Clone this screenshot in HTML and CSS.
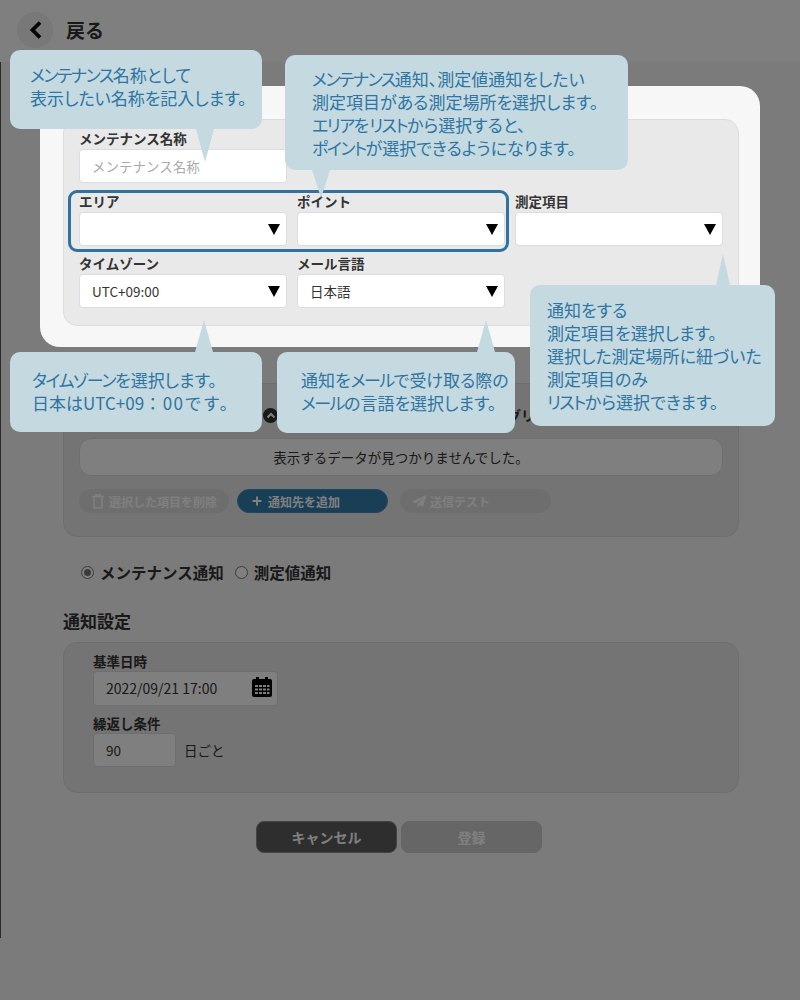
FILE: index.html
```html
<!DOCTYPE html>
<html lang="ja">
  <head>
    <meta charset="UTF-8" />
    <title>メンテナンス通知</title>
    <link rel="stylesheet" href="styles.css">
  </head>
  <body>
    <div class="page">
      <header class="top-bar">
        <span class="back-btn">
          <svg width="18" height="20" viewBox="0 0 18 20"><path d="M14 2.500 6.500 10l7.500 7.500" fill="none" stroke="#000" stroke-width="3.800"/></svg>
        </span>
        <span class="back-label">戻る</span>
      </header>

      <main class="content">
        <div class="spot-card">
          <div class="panel form-grid">
            <div class="field">
              <label>メンテナンス名称</label>
              <div class="input placeholder">メンテナンス名称</div>
            </div>
            <div></div>
            <div></div>

            <div class="field">
              <label>エリア</label>
              <div class="input select"></div>
            </div>
            <div class="field">
              <label>ポイント</label>
              <div class="input select"></div>
            </div>
            <div class="field">
              <label>測定項目</label>
              <div class="input select"></div>
            </div>

            <div class="field">
              <label>タイムゾーン</label>
              <div class="input select">UTC+09:00</div>
            </div>
            <div class="field">
              <label>メール言語</label>
              <div class="input select">日本語</div>
            </div>
          </div>
          <div class="highlight"></div>
        </div>

        <section class="panel dest-panel">
          <div class="dest-title">
            <span class="toggle">
              <svg width="10" height="7" viewBox="0 0 10 7"><path d="M1.500 5.500 5 2l3.500 3.500" fill="none" stroke="#fff" stroke-width="2"/></svg>
            </span>
            <span>通知先のメールアドレス・メーリングリスト</span>
          </div>
          <div class="empty-box">表示するデータが見つかりませんでした。</div>
          <div class="pill-row">
            <span class="pill">
              <svg width="12" height="15" viewBox="0 0 12 15"><path d="M0 2.500h12M4 2.500V.8h4v1.700M2 2.500V14h8V2.500" fill="none" stroke="#fff" stroke-width="1.500"/></svg>
              選択した項目を削除
            </span>
            <span class="pill primary">
              <svg width="12" height="12" viewBox="0 0 12 12"><path d="M6 1.500v9M1.500 6h9" fill="none" stroke="#fff" stroke-width="2"/></svg>
              通知先を追加
            </span>
            <span class="pill send">
              <svg width="15" height="13" viewBox="0 0 15 13"><path d="M14.500 0 0 6.500l3.500 1.800L11.500 3 5.500 9.200V13l2.500-2.700 3 1.500z" fill="#fff"/></svg>
              送信テスト
            </span>
          </div>
        </section>

        <div class="radio-row">
          <span class="radio checked"></span>
          <span class="radio-text">メンテナンス通知</span>
          <span class="radio"></span>
          <span class="radio-text">測定値通知</span>
        </div>

        <h3 class="section-title">通知設定</h3>
        <section class="panel notify-panel">
          <label>基準日時</label>
          <div class="input date-input">
            2022/09/21 17:00
            <svg class="cal-icon" width="20" height="20" viewBox="0 0 20 20">
              <path d="M4 0h3v3H4zM13 0h3v3h-3z" fill="#000"/>
              <rect y="2" width="20" height="18" rx="2" fill="#000"/>
              <path d="M3 8h3v2H3zM7 8h3v2H7zM11 8h3v2h-3zM15 8h2.500v2H15zM3 11.500h3v2H3zM7 11.500h3v2H7zM11 11.500h3v2h-3zM15 11.500h2.500v2H15zM3 15h3v2H3zM7 15h3v2H7zM11 15h3v2h-3zM15 15h2.500v2H15z" fill="#fff"/>
            </svg>
          </div>
          <label class="second-label">繰返し条件</label>
          <div class="repeat-row">
            <div class="input repeat-input">90</div>
            <span>日ごと</span>
          </div>
        </section>

        <div class="actions">
          <button class="btn btn-cancel">キャンセル</button>
          <button class="btn btn-disabled">登録</button>
        </div>
      </main>
    </div>

    <div class="overlay"></div>

    <!-- Tutorial callouts -->
    <div class="tip tip-name"><span class="kana">メンテナンス</span>名称として<br>表示したい名称を記入します。</div>
    <div class="tip tip-area"><span class="kana">メンテナンス</span>通知、測定値通知をしたい<br>測定項目がある測定場所を選択します。<br><span class="kana">エリア</span>を<span class="kana">リスト</span>から選択すると、<br><span class="kana">ポイント</span>が選択できるようになります。</div>
    <div class="tip tip-item">通知をする<br>測定項目を選択します。<br>選択した測定場所に紐づいた<br>測定項目のみ<br><span class="kana">リスト</span>から選択できます。</div>
    <div class="tip tip-zone"><span class="kana">タイムゾーン</span>を選択します。<br>日本はUTC+09<span class="full-width">：00です。</span></div>
    <div class="tip tip-lang">通知を<span class="kana">メール</span>で受け取る際の<br><span class="kana">メール</span>の言語を選択します。</div>
  </body>
</html>
```

FILE: styles.css
```css
* {
  box-sizing: border-box;
}

body {
  margin: 0;
  background-color: #f6f6f6;
  color: #333;
  font-family: "Noto Sans CJK JP", "Noto Sans", sans-serif;
  font-size: 13.500px;
}

.page {
  height: 938px;
  box-shadow: inset 1px 0 0 #555;
}

/* Header */
.top-bar {
  height: 62px;
  background-color: #fff;
  display: flex;
  align-items: center;
  padding: 0 0 3px 17px;
  gap: 13px;
}

.back-btn {
  width: 36px;
  height: 36px;
  border-radius: 50%;
  background-color: #f0f0f0;
  display: flex;
  align-items: center;
  justify-content: center;
}

.back-label {
  font-size: 19px;
  font-weight: 700;
}

/* Main content */
.content {
  padding: 24px 40px 0;
}

.spot-card {
  position: relative;
  z-index: 2;
  background-color: #f7f7f7;
  border-radius: 20px;
  padding: 33px 21px 22px 23px;
  height: 261px;
}

.panel {
  background-color: #e9e9e9;
  border: 1px solid #ddd;
  border-radius: 14px;
}

.form-grid {
  display: grid;
  grid-template-columns: repeat(3, 1fr);
  column-gap: 10px;
  row-gap: 8.500px;
  padding: 9px 15px 17px;
}

.field label,
.notify-panel label {
  display: block;
  height: 20px;
  line-height: 18px;
  font-weight: 700;
}

.notify-panel label {
  line-height: 20px;
}

.input {
  height: 34px;
  line-height: 32px;
  background-color: #fff;
  border: 1px solid #dcdce4;
  border-radius: 4px;
  padding-left: 12px;
  position: relative;
}

.placeholder {
  color: #aaa;
}

.select::after {
  content: "";
  position: absolute;
  right: 6px;
  top: 11px;
  border-left: 6.500px solid transparent;
  border-right: 6.500px solid transparent;
  border-top: 11px solid #000;
}

.highlight {
  position: absolute;
  left: 28px;
  top: 104px;
  width: 441px;
  height: 62px;
  border: 3px solid #2f72a0;
  border-radius: 9px;
}

/* Notification targets */
.dest-panel {
  margin: 36px 21px 0 23px;
  height: 154px;
  padding: 20px 15px 0;
}

.dest-title {
  display: flex;
  align-items: center;
  gap: 5px;
  height: 22px;
  padding-left: 184px;
  font-size: 14px;
  font-weight: 700;
  white-space: nowrap;
}

.toggle {
  width: 15px;
  height: 15px;
  border-radius: 50%;
  background-color: #333;
  display: flex;
  align-items: center;
  justify-content: center;
}

.empty-box {
  margin-top: 12px;
  height: 38px;
  line-height: 36px;
  background-color: #fff;
  border: 1px solid #ddd;
  border-radius: 12px;
  text-align: center;
}

.pill-row {
  display: flex;
  margin-top: 13px;
  gap: 8px;
}

.pill {
  width: 150px;
  height: 24px;
  border-radius: 12px;
  background-color: #ddd;
  color: #fff;
  font-size: 12px;
  font-weight: 700;
  display: flex;
  align-items: center;
  padding-left: 13px;
  gap: 5px;
}

.pill.primary {
  background-color: #337eae;
  border: 1px solid #3f8fc4;
  width: 151px;
}

.pill.send {
  margin-left: 4px;
  width: 151px;
  padding-left: 12px;
  gap: 3px;
}

.radio-row {
  display: flex;
  align-items: center;
  margin: 24px 0 0 41px;
  height: 22px;
}

.radio {
  width: 13px;
  height: 13px;
  border-radius: 50%;
  background-color: #fff;
  border: 1px solid #777;
  margin-right: 6px;
  position: relative;
}

.radio.checked::after {
  content: "";
  position: absolute;
  left: 2px;
  top: 2px;
  width: 7px;
  height: 7px;
  border-radius: 50%;
  background-color: #777;
}

.radio-text {
  font-size: 15.500px;
  font-weight: 700;
  margin-right: 11px;
}

.section-title {
  margin: 27px 0 0 23px;
  height: 22px;
  line-height: 22px;
  font-size: 17px;
  font-weight: 700;
}

.notify-panel {
  margin: 10px 21px 0 23px;
  height: 151px;
  padding: 8px 29px 0;
}

.date-input {
  width: 185px;
  height: 35px;
  line-height: 33px;
  font-size: 14px;
}

.cal-icon {
  position: absolute;
  right: 5px;
  top: 5px;
}

.second-label {
  margin-top: 7px;
}

.repeat-row {
  display: flex;
  align-items: center;
  gap: 8px;
}

.repeat-input {
  width: 83px;
}

.actions {
  display: flex;
  justify-content: center;
  gap: 4px;
  margin-top: 28px;
  padding-right: 2px;
}

.btn {
  width: 141px;
  height: 32px;
  border-radius: 8px;
  color: #fff;
  font-family: inherit;
  font-size: 14px;
  font-weight: 700;
  padding: 0;
}

.btn-cancel {
  background-color: #5c5c5c;
  border: 1px solid #888;
}

.btn-disabled {
  background-color: #ccc;
  border: 1px solid #ccc;
}

/* Dimmed layer */
.overlay {
  position: absolute;
  left: 0;
  top: 0;
  width: 800px;
  height: 1000px;
  z-index: 1;
  background-color: rgba(0, 0, 0, 0.5);
}

/* Tutorial callouts */
.tip {
  position: absolute;
  z-index: 3;
  background-color: #c4dae0;
  color: #2f74a3;
  border-radius: 10px;
  font-size: 17px;
  line-height: 23px;
  font-feature-settings: "palt";
  white-space: nowrap;
}

.kana {
  letter-spacing: -1.500px;
}

.full-width {
  font-feature-settings: normal;
  letter-spacing: 1.500px;
}

.tip::after {
  content: "";
  position: absolute;
  border-left: 9px solid transparent;
  border-right: 9px solid transparent;
}

.tip-name {
  left: 10px;
  top: 50px;
  width: 252px;
  height: 79px;
  padding: 13px 0 0 20px;
}

.tip-name::after {
  left: 186px;
  top: 79px;
  border-top: 33px solid #c4dae0;
}

.tip-area {
  left: 285px;
  top: 55px;
  width: 343px;
  height: 115px;
  padding: 12px 0 0 27px;
}

.tip-area::after {
  left: 27px;
  top: 115px;
  border-top: 28px solid #c4dae0;
}

.tip-item {
  left: 530px;
  top: 285px;
  width: 245px;
  height: 141px;
  padding: 13px 0 0 17px;
}

.tip-item::after {
  left: 186px;
  top: -31px;
  border-left-width: 7px;
  border-right-width: 7px;
  border-bottom: 31px solid #c4dae0;
}

.tip-zone {
  left: 10px;
  top: 352px;
  width: 252px;
  height: 80px;
  padding: 16px 0 0 22px;
}

.tip-zone::after {
  left: 185px;
  top: -32px;
  border-bottom: 32px solid #c4dae0;
}

.tip-lang {
  left: 277px;
  top: 352px;
  width: 238px;
  height: 81px;
  padding: 16px 0 0 24px;
}

.tip-lang::after {
  left: 200px;
  top: -32px;
  border-bottom: 32px solid #c4dae0;
}
```
